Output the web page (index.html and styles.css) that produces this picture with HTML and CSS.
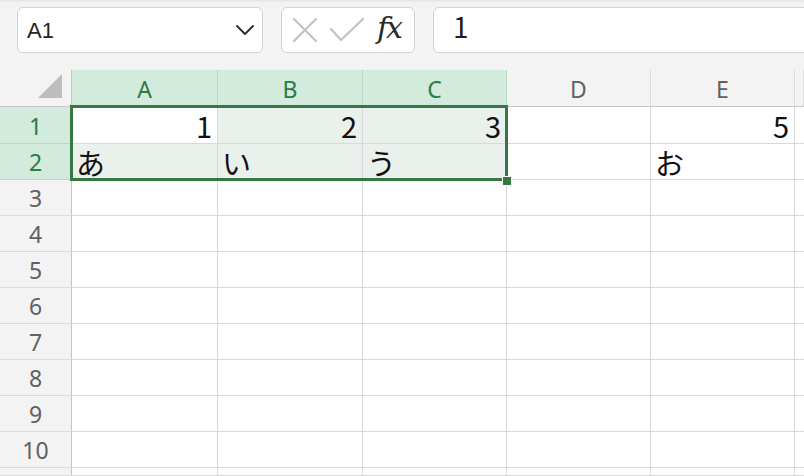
FILE: index.html
```html
<!DOCTYPE html>
<html lang="ja">
<head>
<meta charset="utf-8">
<link rel="stylesheet" href="styles.css">
</head>
<body>
<div class="toolbar">
  <div class="namebox">
    <span class="name">A1</span>
    <svg class="chev" width="20" height="12" viewBox="0 0 20 12"><path d="M2 2 L10 10 L18 2" fill="none" stroke="#333" stroke-width="2" stroke-linecap="round" stroke-linejoin="round"/></svg>
  </div>
  <div class="fxbox">
    <svg width="28" height="28" viewBox="0 0 28 28"><path d="M3 3 L25 25 M25 3 L3 25" stroke="#c2c2c2" stroke-width="2.2" stroke-linecap="round"/></svg>
    <svg width="36" height="28" viewBox="0 0 36 28"><path d="M2 13 L12 24 L34 3" fill="none" stroke="#c2c2c2" stroke-width="2.2" stroke-linecap="round" stroke-linejoin="round"/></svg>
    <span class="fx">fx</span>
  </div>
  <div class="formula"><span class="ftext">1</span></div>
</div>
<div class="grid">
  <div class="corner"><svg width="24" height="24" viewBox="0 0 24 24"><path d="M0 24 L24 24 L24 0 Z" fill="#bdbdbd"/></svg></div>
  <div class="ch sel">A</div>
  <div class="ch sel">B</div>
  <div class="ch sel last">C</div>
  <div class="ch">D</div>
  <div class="ch">E</div>
  <div class="ch"></div>

  <div class="rh sel">1</div>
  <div class="c num">1</div>
  <div class="c num hl">2</div>
  <div class="c num hl">3</div>
  <div class="c"></div>
  <div class="c num">5</div>
  <div class="c"></div>

  <div class="rh sel">2</div>
  <div class="c hl">あ</div>
  <div class="c hl">い</div>
  <div class="c hl">う</div>
  <div class="c"></div>
  <div class="c">お</div>
  <div class="c"></div>

  <div class="rh">3</div><div class="c"></div><div class="c"></div><div class="c"></div><div class="c"></div><div class="c"></div><div class="c"></div>
  <div class="rh">4</div><div class="c"></div><div class="c"></div><div class="c"></div><div class="c"></div><div class="c"></div><div class="c"></div>
  <div class="rh">5</div><div class="c"></div><div class="c"></div><div class="c"></div><div class="c"></div><div class="c"></div><div class="c"></div>
  <div class="rh">6</div><div class="c"></div><div class="c"></div><div class="c"></div><div class="c"></div><div class="c"></div><div class="c"></div>
  <div class="rh">7</div><div class="c"></div><div class="c"></div><div class="c"></div><div class="c"></div><div class="c"></div><div class="c"></div>
  <div class="rh">8</div><div class="c"></div><div class="c"></div><div class="c"></div><div class="c"></div><div class="c"></div><div class="c"></div>
  <div class="rh">9</div><div class="c"></div><div class="c"></div><div class="c"></div><div class="c"></div><div class="c"></div><div class="c"></div>
  <div class="rh">10</div><div class="c"></div><div class="c"></div><div class="c"></div><div class="c"></div><div class="c"></div><div class="c"></div>
  <div class="rh"></div><div class="c"></div><div class="c"></div><div class="c"></div><div class="c"></div><div class="c"></div><div class="c"></div>

  <div class="selection"><div class="handle"></div></div>
</div>
</body>
</html>
```

FILE: styles.css
```css
* { box-sizing: border-box; }
html, body { margin: 0; padding: 0; }
body {
  width: 804px;
  height: 476px;
  overflow: hidden;
  background: #ffffff;
  font-family: "Noto Sans", sans-serif;
}
.toolbar {
  height: 70px;
  background: #f3f3f3;
  display: flex;
  align-items: flex-start;
  padding: 7px 0 0 17px;
  gap: 18px;
  box-shadow: inset 0 3px 3px -2px rgba(0,0,0,0.08);
  white-space: nowrap;
  overflow: hidden;
}
.namebox {
  width: 246px;
  height: 46px;
  flex: none;
  background: #fff;
  border: 1px solid #d2d2d2;
  border-radius: 6px;
  display: flex;
  align-items: center;
  justify-content: space-between;
  padding: 0 7px 0 9px;
}
.name {
  font-family: "Liberation Sans", Arial, sans-serif;
  font-size: 22px;
  color: #242424;
  padding-top: 2px;
}
.fxbox {
  width: 134px;
  height: 46px;
  flex: none;
  background: #fff;
  border: 1px solid #d2d2d2;
  border-radius: 6px;
  display: flex;
  align-items: center;
  padding: 0 0 0 9px;
  gap: 10px;
}
.fx {
  font-family: "DejaVu Serif", "Liberation Serif", serif;
  font-style: italic;
  font-size: 30px;
  color: #2a2a2a;
  margin-left: 2px;
  letter-spacing: -2px;
  line-height: 1;
  margin-top: -4px;
}
.formula {
  width: 380px;
  height: 46px;
  flex: none;
  background: #fff;
  border: 1px solid #d2d2d2;
  border-radius: 6px;
  padding: 0 0 0 19px;
  display: flex;
  align-items: center;
}
.ftext {
  font-family: "Noto Sans CJK JP", sans-serif;
  font-size: 28px;
  color: #1e1e1e;
  line-height: 1.2;
  margin-top: -6px;
}
.grid {
  position: relative;
  display: grid;
  grid-template-columns: 72px 146px 145px 144px 144px 144px 9px;
  grid-template-rows: 37px 37px repeat(9, 36px);
  overflow: hidden;
  height: 406px;
}
.corner {
  background: #f3f3f3;
  border-right: 1px solid #c6c6c6;
  border-bottom: 1px solid #c6c6c6;
  display: flex;
  align-items: flex-end;
  justify-content: flex-end;
  padding: 0 9px 8px 0;
}
.corner svg { display: block; }
.ch {
  background: #f3f3f3;
  border-right: 1px solid #dcdcdc;
  border-bottom: 1px solid #c6c6c6;
  display: flex;
  align-items: center;
  justify-content: center;
  font-size: 23px;
  color: #616161;
  padding-top: 2px;
}
.ch.sel {
  background: #d3ebdc;
  color: #2c7a44;
  border-right-color: #b2dbc1;
}
.ch.last { border-right-color: #b2dbc1; }
.rh {
  background: #f3f3f3;
  border-right: 1px solid #c6c6c6;
  border-bottom: 1px solid #dcdcdc;
  display: flex;
  align-items: center;
  justify-content: center;
  font-size: 23px;
  color: #616161;
  padding-top: 1px;
}
.rh.sel {
  background: #d3ebdc;
  color: #2c7a44;
  border-bottom-color: #b2dbc1;
}
.c {
  border-right: 1px solid #d8d8d8;
  border-bottom: 1px solid #d8d8d8;
  background: #fff;
  display: flex;
  align-items: center;
  font-family: "Noto Sans CJK JP", sans-serif;
  font-size: 29px;
  color: #111;
  padding: 0 5px 0 4px;
  line-height: 34px;
  white-space: nowrap;
}
.c.num { justify-content: flex-end; }
.c.hl { background: #eaf0ec; }
.selection {
  position: absolute;
  left: 70px;
  top: 35px;
  width: 438px;
  height: 76px;
  border: 3px solid #367744;
  pointer-events: none;
}
.handle {
  position: absolute;
  right: -7px;
  bottom: -8px;
  width: 10px;
  height: 10px;
  background: #367744;
  border: 1px solid #fff;
}
```
